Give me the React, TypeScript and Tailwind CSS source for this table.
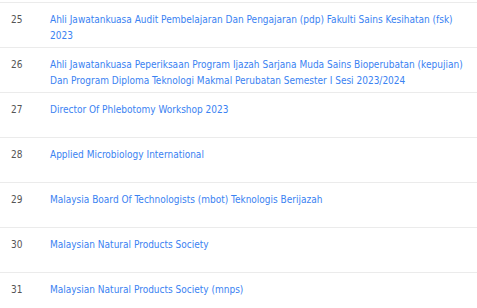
const rows = [
  { no: 25, title: "Ahli Jawatankuasa Audit Pembelajaran Dan Pengajaran (pdp) Fakulti Sains Kesihatan (fsk) 2023" },
  {
    no: 26,
    title:
      "Ahli Jawatankuasa Peperiksaan Program Ijazah Sarjana Muda Sains Bioperubatan (kepujian) Dan Program Diploma Teknologi Makmal Perubatan Semester I Sesi 2023/2024",
  },
  { no: 27, title: "Director Of Phlebotomy Workshop 2023" },
  { no: 28, title: "Applied Microbiology International" },
  { no: 29, title: "Malaysia Board Of Technologists (mbot) Teknologis Berijazah" },
  { no: 30, title: "Malaysian Natural Products Society" },
  { no: 31, title: "Malaysian Natural Products Society (mnps)" },
];

export default function App() {
  return (
    <div className="h-[308px] overflow-hidden bg-white pt-[2px] font-['DejaVu_Sans_Condensed','DejaVu_Sans',sans-serif] text-[10px] leading-[16px]">
      {rows.map((r) => (
        <div key={r.no} className="flex h-[45px] border-t border-[#ebebeb]">
          <div className="w-[50px] shrink-0 pl-[11px] pt-[9px] text-[#555]">{r.no}</div>
          <div className="w-[414px] pt-[9px]">
            <a href="#" className="text-[#3a82f2]">
              {r.title}
            </a>
          </div>
        </div>
      ))}
    </div>
  );
}
